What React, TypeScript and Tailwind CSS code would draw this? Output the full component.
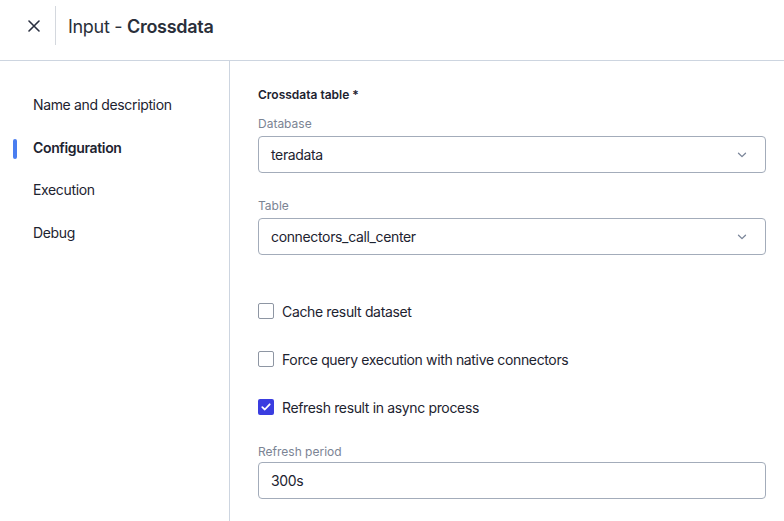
import React from "react";

const font = { fontFamily: "Inter, 'Noto Sans', sans-serif" };

function Chevron() {
  return (
    <svg width="10" height="6" viewBox="0 0 10 6" fill="none">
      <path d="M1.5 1.2 L5 4.6 L8.5 1.2" stroke="#7a8599" strokeWidth="1.3" strokeLinecap="round" strokeLinejoin="round" />
    </svg>
  );
}

function SelectField({ label, value }: { label: string; value: string }) {
  return (
    <div className="flex flex-col">
      <div className="text-[12px] leading-[16px] text-[#7b8494] mb-[4px]">{label}</div>
      <div className="h-[37px] w-[508px] rounded-[4px] border border-[#a3acba] flex items-center justify-between pl-[12px] pr-[18px]">
        <span className="text-[14px] tracking-[-0.35px] text-[#1d2330]">{value}</span>
        <Chevron />
      </div>
    </div>
  );
}

function Check({ label, checked }: { label: string; checked?: boolean }) {
  return (
    <div className="flex items-center gap-[8px] h-[20px]">
      {checked ? (
        <div className="w-[16px] h-[16px] rounded-[2px] bg-[#3a3de0] flex items-center justify-center">
          <svg width="10" height="8" viewBox="0 0 10 8" fill="none">
            <path d="M1.3 4.2 L3.8 6.5 L8.7 1.3" stroke="white" strokeWidth="1.8" strokeLinecap="round" strokeLinejoin="round" />
          </svg>
        </div>
      ) : (
        <div className="w-[16px] h-[16px] rounded-[2px] border border-[#8e96a3] bg-white" />
      )}
      <span className="text-[14px] tracking-[-0.35px] text-[#1d2330]">{label}</span>
    </div>
  );
}

export default function App() {
  const nav = ["Name and description", "Configuration", "Execution", "Debug"];
  return (
    <div className="w-[784px] h-[521px] bg-white flex flex-col overflow-hidden" style={font}>
      <div className="h-[61px] border-b border-[#cdd5e0] flex items-center shrink-0">
        <div className="w-[56px] h-full flex items-center">
          <div className="w-[55px] flex justify-center pl-[12px] -mt-[8px]">
            <svg width="12" height="12" viewBox="0 0 12 12" fill="none">
              <path d="M1 1 L11 11 M11 1 L1 11" stroke="#2a3040" strokeWidth="1.6" strokeLinecap="round" />
            </svg>
          </div>
        </div>
        <div className="w-px h-[39px] bg-[#d4d8de] -ml-[1px] self-start mt-[6px]" />
        <div className="ml-[12px] text-[18px] tracking-[-0.3px] text-[#2a2f3a] -mt-[8px]">
          Input - <span className="font-semibold">Crossdata</span>
        </div>
      </div>
      <div className="flex flex-1">
        <div className="w-[230px] border-r border-[#cdd5e0] pt-[34px] shrink-0">
          {nav.map((n, i) => (
            <div key={n} className="relative h-[42.5px] flex items-start pl-[33px]">
              {i === 1 && <div className="absolute left-[13px] top-[1px] w-[4px] h-[20px] rounded-full bg-[#4a7ef0]" />}
              <span className={"text-[14px] tracking-[-0.35px] leading-[20px] text-[#1d2330] " + (i === 1 ? "font-semibold" : "")}>{n}</span>
            </div>
          ))}
        </div>
        <div className="flex-1 pl-[28px] pt-[26px]">
          <div className="text-[12px] font-semibold text-[#1d2330] leading-[16px] mb-[13px]">Crossdata table *</div>
          <SelectField label="Database" value="teradata" />
          <div className="h-[25px]" />
          <SelectField label="Table" value="connectors_call_center" />
          <div className="h-[46px]" />
          <div className="flex flex-col gap-[28px]">
            <Check label="Cache result dataset" />
            <Check label="Force query execution with native connectors" />
            <Check label="Refresh result in async process" checked />
          </div>
          <div className="h-[27px]" />
          <div className="text-[12px] leading-[16px] text-[#7b8494] mb-[2px]">Refresh period</div>
          <div className="h-[37px] w-[508px] rounded-[4px] border border-[#a3acba] flex items-center pl-[12px]">
            <span className="text-[14px] tracking-[-0.35px] text-[#1d2330]">300s</span>
          </div>
        </div>
      </div>
    </div>
  );
}
